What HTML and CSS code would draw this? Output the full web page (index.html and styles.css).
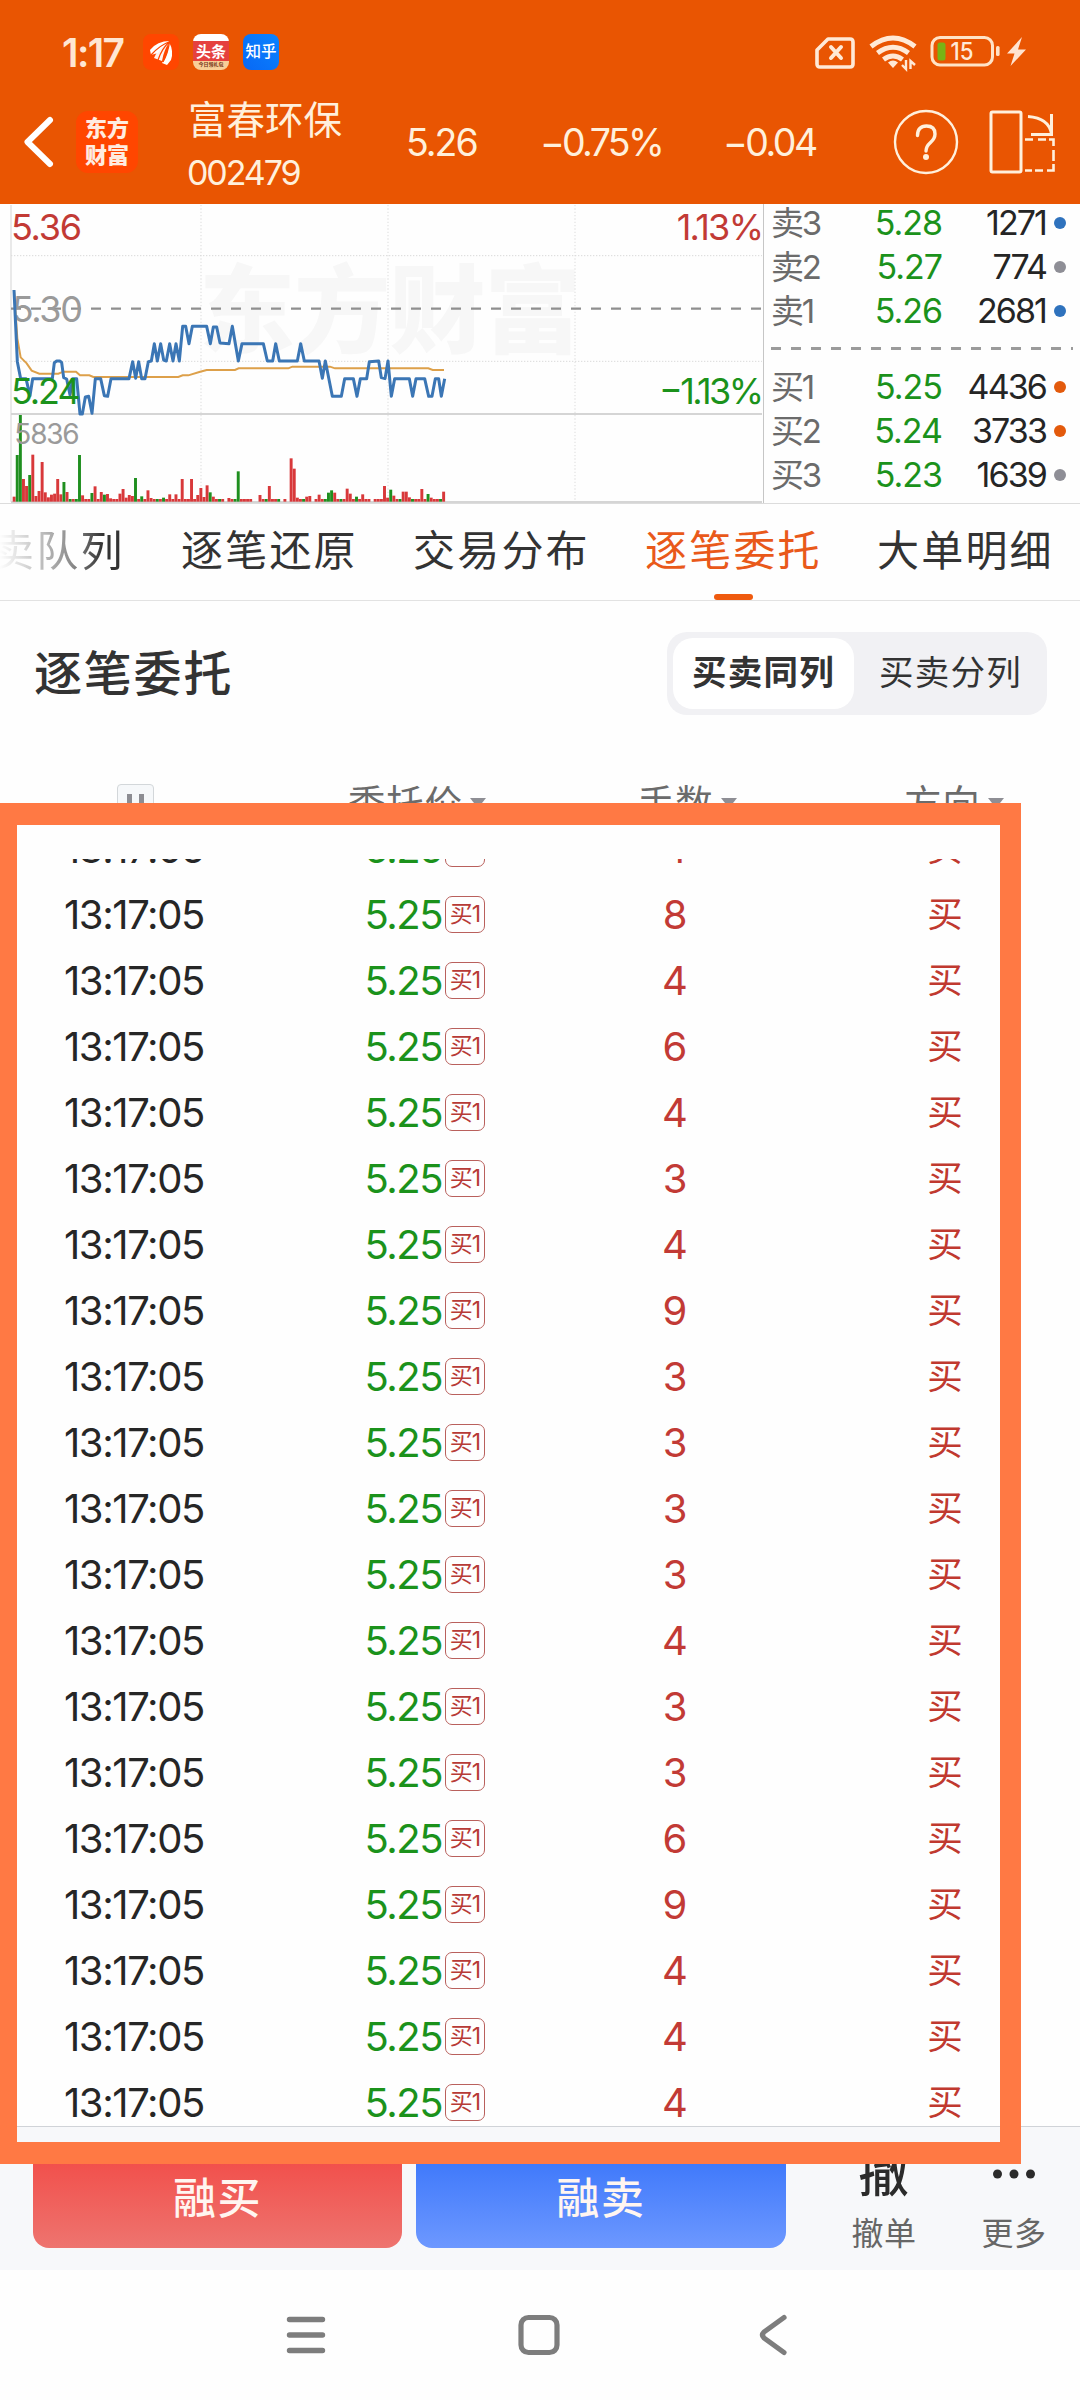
FILE: index.html
```html
<!DOCTYPE html>
<html lang="zh-CN">
<head>
<meta charset="utf-8">
<title>富春环保 002479</title>
<link rel="stylesheet" href="styles.css">
</head>
<body>
<div class="phone">
  <header class="header">
    <div class="status">
      <span class="clock">1:17</span>
      <span class="app app-em"><svg width="36" height="36" viewBox="0 0 36 36"><g fill="#fff"><path d="M7 16Q14 7 27 7Q20 11 15 19L8 21Z"/><path d="M11 24Q16 11 27 7.500Q21 15 19 27Z" opacity=".93"/><path d="M19 29Q25 22 26 8Q31 17 28 26L24 31Z"/></g><path d="M8 21Q17 11 27 7.500M15 26Q19 14 27 7.500M20 28Q25 19 26.500 8" fill="none" stroke="#ff4600" stroke-width="1.300"/></svg></span>
      <span class="app app-tt"><b>头条</b><i>今日领礼包</i></span>
      <span class="app app-zh">知乎</span>
      <svg class="status-icons" width="216" height="40" viewBox="0 0 216 40">
        <path d="M13 5H35Q38 5 38 8V30Q38 33 35 33H5Q2 33 2 30V16Z" fill="none" stroke="#ffe9d6" stroke-width="3.600" stroke-linejoin="round"/>
        <path d="M16 13L26 24M26 13L16 24" stroke="#ffe9d6" stroke-width="4" stroke-linecap="round"/>
        <g fill="none" stroke="#ffe9d6" stroke-width="5"><path d="M56 12.500Q78 -4.500 100 12.500"/><path d="M62.500 19Q78 7.500 93.500 19"/><path d="M68.500 25.500Q78 18.500 87.500 25.500"/></g>
        <path d="M73 28.500Q78 24.500 83 28.500L78 34Z" fill="#ffe9d6"/>
        <path d="M91 26V35L87 31M95.500 35V27L100 31" fill="none" stroke="#ffe9d6" stroke-width="2.400"/>
        <rect x="117" y="3.500" width="60.500" height="27.500" rx="8" fill="none" stroke="#ffe3c6" stroke-width="3"/>
        <rect x="122.500" y="8.500" width="8" height="18" rx="2.500" fill="#78b315"/>
        <text x="135.500" y="25.800" font-size="24.500" font-weight="500" textLength="23" lengthAdjust="spacingAndGlyphs" fill="#ffe9d6">15</text>
        <rect x="181" y="12" width="3.600" height="10" rx="1.600" fill="#ffe3c6"/>
        <path d="M207 3L192 19.500H199.500L195.500 32L211 15.500H203Z" fill="#ffe3d0"/>
      </svg>
    </div>
    <div class="titlebar">
      <svg class="back" width="32" height="54" viewBox="0 0 32 54"><path d="M27 5L4.500 27L27 49" fill="none" stroke="#fff" stroke-width="6" stroke-linecap="round" stroke-linejoin="round"/></svg>
      <div class="logo"><span>东方</span><span>财富</span></div>
      <div class="stock"><span class="stock-name">富春环保</span><span class="stock-code">002479</span></div>
      <span class="h-price">5.26</span>
      <span class="h-pct">−0.75%</span>
      <span class="h-chg">−0.04</span>
      <svg class="help" width="66" height="66" viewBox="0 0 66 66" fill="none" stroke="#fff0dc"><circle cx="33" cy="33" r="31" stroke-width="2.400"/><path d="M24.500 26.500Q24.500 17 33.500 17Q42 17 42 25Q42 29.500 37.500 33.500Q33 37.500 33 42" stroke-width="3.400" stroke-linecap="round"/><circle cx="33" cy="48" r="3" fill="#fff0dc" stroke="none"/></svg>
      <svg class="rotate" width="68" height="64" viewBox="0 0 68 64" fill="none" stroke="#fff0dc"><rect x="2" y="2" width="30" height="60" rx="1.500" stroke-width="3"/><path d="M39 6.500Q60 8 62.500 24M62.500 4V24.500H42" stroke-width="3"/><path d="M36 29.500H44M49 29.500H57M60 29.500H64.500V36M64.500 40V51M64.500 54V60.500H58M54 60.500H46M43 60.500H36" stroke-width="2.600"/></svg>
    </div>
  </header>

  <section class="quote">
    <svg class="chart" width="764" height="300" viewBox="0 27 2292 900">
      <text class="wm" x="597" y="450" textLength="1145">东方财富</text>
      <g fill="none">
        <path d="M603 30V920M1164 30V920M1725 30V920" stroke="#e4e4e4" stroke-width="4" stroke-dasharray="4 6"/>
        <path d="M33 182H2286M33 499H2286" stroke="#dadada" stroke-width="3" stroke-dasharray="4 5"/>
        <path d="M33 30V920" stroke="#dedede" stroke-width="4"/>
        <path d="M33 657H2286M33 921H2286" stroke="#d5d5d5" stroke-width="6"/>
        <path d="M33 341H2286" stroke="#8f8f8f" stroke-width="7" stroke-dasharray="30 30"/>
        <path d="M2290.500 27V924" stroke="#c6c6c6" stroke-width="3"/>
      </g>
      <g id="volume"></g>
      <path d="M42 285L52 430L62 487L80 505L95 527L118 536H175L190 530H228L240 541H268L280 546H535L548 541H565L598 531L620 525H705L716 520H865L877 515H990L1005 520H1285L1298 525H1332" fill="none" stroke="#dda04a" stroke-width="6"/>
      <text class="ct mid" x="35" y="380" textLength="214">5.30</text>
      <path d="M42 285L52 500L62 551H78L90 602L98 551H157L163 503L170 498H180L185 503L191 548L200 552L210 600L218 551H230L240 657H247L256 606L266 604L276 655L286 551H302L313 602L323 604L333 551H387L398 500L407 550L416 500L425 551H435L445 500L454 498L463 446L472 498L482 446L491 495L499 498L509 446L519 498L528 446L538 498L548 394H557L567 446L577 394H620L631 446L640 396H650L660 444L687 446L697 394L715 498L726 446H790L802 498H818L827 446L838 498H892L902 446L913 498H957L967 550L976 498L997 604H1024L1034 551H1060L1071 604L1081 551H1100L1108 500L1136 498L1144 548L1155 551L1164 498L1174 604L1184 551H1228L1238 604L1248 551H1274L1286 604H1296L1306 551H1316L1324 604L1334 551" fill="none" stroke="#3b76b5" stroke-width="9" stroke-linejoin="round"/>
      <text class="ct up" x="33" y="135" textLength="213">5.36</text>
      <text class="ct down" x="33" y="627" textLength="209">5.24</text>
      <text class="ct up" x="2030" y="135" textLength="262">1.13%</text>
      <text class="ct down" x="1977" y="627" textLength="315">−1.13%</text>
      <text class="vol" x="43" y="746" textLength="196">5836</text>
    </svg>
    <div class="book">
      <div class="lv"><span class="side">卖3</span><span class="px">5.28</span><span class="qty">1271</span><i class="dot blue"></i></div>
      <div class="lv"><span class="side">卖2</span><span class="px">5.27</span><span class="qty">774</span><i class="dot"></i></div>
      <div class="lv"><span class="side">卖1</span><span class="px">5.26</span><span class="qty">2681</span><i class="dot blue"></i></div>
      <div class="split"></div>
      <div class="lv"><span class="side">买1</span><span class="px">5.25</span><span class="qty">4436</span><i class="dot orange"></i></div>
      <div class="lv"><span class="side">买2</span><span class="px">5.24</span><span class="qty">3733</span><i class="dot orange"></i></div>
      <div class="lv"><span class="side">买3</span><span class="px">5.23</span><span class="qty">1639</span><i class="dot"></i></div>
    </div>
  </section>

  <nav class="tabs">
    <span class="tab faded">卖队列</span>
    <span class="tab">逐笔还原</span>
    <span class="tab">交易分布</span>
    <span class="tab active">逐笔委托</span>
    <span class="tab">大单明细</span>
  </nav>

  <section class="panel-head">
    <h1>逐笔委托</h1>
    <div class="segment"><span class="seg on">买卖同列</span><span class="seg">买卖分列</span></div>
  </section>

  <div class="cols">
    <span class="pause"><i></i><i></i></span>
    <span class="col c-price">委托价<i class="tri"></i></span>
    <span class="col c-qty">手数<i class="tri"></i></span>
    <span class="col c-dir">方向<i class="tri"></i></span>
  </div>
  <div class="list" id="orders"></div>

  <footer class="toolbar">
    <span class="btn buy">融买</span>
    <span class="btn sell">融卖</span>
    <span class="tool cancel"><b>撤</b><span>撤单</span></span>
    <span class="tool more"><svg width="44" height="12" viewBox="0 0 44 12" fill="#2b2b2b"><circle cx="5.500" cy="6" r="4.500"/><circle cx="22" cy="6" r="4.500"/><circle cx="38.500" cy="6" r="4.500"/></svg><span>更多</span></span>
  </footer>
  <div class="navbar">
    <svg width="40" height="44" viewBox="0 0 40 44"><path d="M3.500 6.500H36.500M3.500 22H36.500M3.500 37.500H36.500" stroke="#7d7d7d" stroke-width="5.400" stroke-linecap="round"/></svg>
    <svg width="44" height="44" viewBox="0 0 44 44"><rect x="4" y="4.500" width="36" height="35" rx="7.500" fill="none" stroke="#7d7d7d" stroke-width="5.200"/></svg>
    <svg width="30" height="44" viewBox="0 0 30 44"><path d="M26 4.500L6 19Q3 22 6 25L26 39.500" fill="none" stroke="#7d7d7d" stroke-width="5.200" stroke-linecap="round" stroke-linejoin="round"/></svg>
  </div>
  <div class="highlight"></div>
</div>
<script src="app.js"></script>
</body>
</html>
```
FILE: styles.css
```css
* { box-sizing: border-box; }
body { margin: 0; background: #fff; font-family: Inter, "Noto Sans CJK SC", sans-serif; color: #2a2a2a; }
i { font-style: normal; }
.phone { position: relative; width: 1080px; height: 2400px; overflow: hidden; background: #fefefe; display: flex; flex-direction: column; }

.header { height: 204px; background: #e95502; color: #fff0dc; flex: none; }
.status { display: flex; align-items: center; height: 104px; padding: 0 44px 0 62px; }
.clock { width: 81px; font-size: 39px; font-weight: 600; letter-spacing: -1.600px; color: #ffe6d2; line-height: 40px; padding-top: 1px; }
.app { width: 36px; height: 36px; border-radius: 8px; margin-right: 14px; overflow: hidden; display: flex; flex-direction: column; align-items: center; flex: none; }
.app-em { background: #ff4600; }
.app-tt { background: linear-gradient(#fff 0 7px, #e5413f 7px 27px, #f8cf98 27px); color: #fff; }
.app-tt b { font-size: 15px; line-height: 16px; margin-top: 10px; font-weight: 700; }
.app-tt i { font-size: 5px; line-height: 9px; color: #703015; font-weight: 700; }
.app-zh { background: linear-gradient(45deg, #0868f5, #0a84ff); color: #fff; font-size: 15.500px; line-height: 36px; font-weight: 500; }
.status-icons { margin: 3px 5px 0 auto; }

.titlebar { display: flex; align-items: center; height: 76px; }
.back { margin-left: 23px; }
.logo { width: 62px; height: 62px; margin-left: 21px; border-radius: 12px; background: #ff4600; color: #ffece0; font-weight: 900; font-size: 22px; line-height: 27px; display: flex; flex-direction: column; align-items: center; justify-content: center; flex: none; }
.stock { margin-left: 50px; width: 218px; padding-top: 9px; display: flex; flex-direction: column; }
.stock-name { font-size: 38.500px; line-height: 52px; }
.stock-code { font-size: 34px; line-height: 54px; letter-spacing: -2.100px; margin-left: -1px; }
.h-price, .h-pct, .h-chg { font-size: 37.500px; letter-spacing: -2.500px; line-height: 40px; white-space: nowrap; padding-top: 1px; }
.h-price { width: 134px; letter-spacing: -2px; }
.h-pct { width: 183px; letter-spacing: -2.700px; }
.h-chg { width: 170px; }
.rotate { margin-left: 30px; }

.quote { height: 300px; display: flex; border-bottom: 1px solid #dcdcdc; flex: none; }
.chart { display: block; flex: none; }
.chart text { font-family: Inter, "Noto Sans CJK SC", sans-serif; }
.wm { font-size: 288px; font-weight: 900; fill: #f7f7f7; }
.ct { font-size: 108px; }
.up { fill: #c23a35; }
.down { fill: #1b921b; }
.mid { fill: #9a9a9a; }
.vol { font-size: 84px; fill: #9a9a9a; }
.book { flex: 1; display: flex; flex-direction: column; margin-top: -3px; }
.lv { display: grid; grid-template-columns: 72px 99px 104px 20px; padding-left: 7px; align-items: center; height: 44px; font-size: 34px; line-height: 44px; letter-spacing: -2.200px; }
.side { font-size: 33px; color: #6b6b6b; }
.px { text-align: right; color: #1b921b; letter-spacing: -1px; }
.qty { text-align: right; color: #252525; letter-spacing: -1.900px; }
.dot { width: 12px; height: 12px; border-radius: 50%; background: #8e8e96; margin-left: 8px; }
.dot.blue { background: #2f72bd; }
.dot.orange { background: #e35a0c; }
.split { height: 3px; margin: 14px 7px 15px; background: repeating-linear-gradient(90deg, #9b9b9b 0 10px, transparent 10px 20px); }

.tabs { height: 97px; display: flex; border-bottom: 1px solid #e2e2e2; gap: 54px; flex: none; }
.tab { position: relative; width: 178px; font-size: 42px; letter-spacing: 2.200px; line-height: 94px; color: #333; white-space: nowrap; flex: none; }
.tab.faded { width: 135px; margin-left: -8px; background: linear-gradient(90deg, #fff 5%, #bbb 38%, #888 60%, #333 82%); -webkit-background-clip: text; background-clip: text; color: transparent; }
.tab.active { color: #e9591a; }
.tab.active::after { content: ""; position: absolute; left: 69px; bottom: 0; width: 39px; height: 6px; border-radius: 3px; background: #ef5a0e; }

.panel-head { height: 147px; flex: none; display: flex; align-items: center; justify-content: space-between; padding: 0 33px 2px 34px; }
h1 { margin: 0; font-size: 48px; font-weight: 500; letter-spacing: 1.800px; color: #333; line-height: 60px; }
.segment { width: 380px; height: 83px; border-radius: 20px; background: #f1f1f4; display: flex; padding: 6px; }
.seg { width: 181px; height: 71px; line-height: 70px; text-align: center; font-size: 34.500px; letter-spacing: 1.300px; color: #333; white-space: nowrap; }
.seg + .seg { margin-left: 6px; }
.seg.on { background: #fff; border-radius: 20px; font-weight: 700; }

.cols { height: 111px; padding: 36px 0 0 117px; display: flex; flex: none; }
.pause { width: 37px; height: 37px; border: 1px solid #d3d7da; border-radius: 4px; background: #f6f8fa; display: flex; justify-content: center; gap: 7px; padding-top: 9px; margin-right: 194px; }
.pause i { width: 5px; height: 18px; background: #8c8c92; }
.col { display: flex; font-size: 37.500px; line-height: 40px; letter-spacing: .8px; color: #6b6b6b; white-space: nowrap; }
.tri { border: 8.500px solid transparent; border-top: 10px solid #8e8e94; border-bottom: 0; height: 0; margin: 14px 0 0 7px; }
.c-price { width: 289px; }
.c-qty { width: 267px; }

.list { height: 1267px; overflow: hidden; flex: none; }
.row { display: grid; grid-template-columns: 278px 164px 43px 380px 160px; height: 66px; align-items: center; font-size: 40px; line-height: 66px; }
.row:first-child { margin-top: -43.500px; }
.time { padding-left: 64px; letter-spacing: -1.400px; white-space: nowrap; color: #262626; }
.price { text-align: right; letter-spacing: -1.500px; color: #1b921b; }
.tag { width: 40px; height: 37px; margin-left: 3px; border: 1px solid #b9605c; border-radius: 7px; color: #b73a36; font-size: 23px; line-height: 34px; letter-spacing: -1px; text-align: center; white-space: nowrap; }
.count { text-align: center; color: #c23a35; }
.dir { font-size: 35.500px; text-align: center; color: #c0392f; line-height: 60px; }

.toolbar { height: 144px; background: #f7f8fa; border-top: 1px solid #d0d3d8; padding: 21px 0 0 33px; display: flex; flex: none; }
.btn { width: 369px; height: 100px; border-radius: 16px; color: #fff5f0; font-size: 43px; font-weight: 500; line-height: 100px; letter-spacing: 1.600px; text-align: center; margin-right: 14px; }
.buy { background: linear-gradient(#f24a46, #ee746f); }
.sell { background: linear-gradient(#3874fa, #6d98ff); width: 370px; }
.tool { display: flex; flex-direction: column; align-items: center; font-size: 32px; color: #666; line-height: 40px; letter-spacing: .6px; }
.cancel { width: 84px; margin-left: 42px; }
.cancel b { font-size: 51px; line-height: 60px; font-weight: 500; color: #2b2b2b; margin-top: -4px; }
.cancel span { margin-top: 10px; }
.more { width: 80px; margin-left: 48px; }
.more svg { margin-top: 20px; }
.more span { margin-top: 34px; }

.navbar { flex: 1; display: flex; padding: 43px 0 0 286px; background: #fefefe; }
.navbar svg:nth-child(2) { margin-left: 191px; }
.navbar svg:nth-child(3) { margin-left: 197px; }

/* annotation frame drawn over the order list */
.highlight { position: absolute; left: 0; top: 803px; width: 1021px; height: 1361px; border: solid #ff7944; border-width: 22px 21px 22px 17px; }
```
FILE: app.js
```js
// Order rows: only the lot size varies.
var counts = [4, 8, 4, 6, 4, 3, 4, 9, 3, 3, 3, 3, 4, 3, 3, 6, 9, 4, 4, 4];
document.getElementById("orders").innerHTML = counts.map(function (n) {
  return '<div class="row"><span class="time">13:17:05</span><span class="price">5.25</span>' +
    '<span class="tag">买1</span><span class="count">' + n + '</span><span class="dir">买</span></div>';
}).join("");

// Volume bars: colour and height per minute, "-" is a minute without trades.
var bars = ("r15 g140 g260 r68 r47 g80 r141 r17 r32 r119 r28 r13 r21 r24 r68 r22 g59 r29 g8 r8 g8 g140 r19 r8 r8 g26 r46 r8 r29 g21 r23 r10 r8 r8 r24 r38 r12 r20 r17 g71 r8 g16 r8 r34 r11 r8 g8 r8 g12 r8 r22 r8 r22 r8 r68 r8 r8 r68 r8 r20 r41 r14 r49 g28 r15 r8 g8 r8 - r11 r8 g8 g91 r8 r8 r8 r8 - - r20 r8 g8 r47 r8 r8 g8 - r8 - r130 r99 r12 r8 g8 r15 r17 - r8 r21 r8 g8 g27 g34 r27 r8 g8 r8 r39 r24 r8 g15 r8 r22 r8 r8 - r8 r8 r8 r47 r12 g36 r18 r8 g8 r30 r30 r13 g8 r8 r8 r38 r8 g23 r12 r8 r8 g8 r30").split(" ");
document.getElementById("volume").innerHTML = bars.map(function (b, i) {
  if (b === "-") return "";
  var h = +b.slice(1);
  return '<rect x="' + (38 + i * 9.337).toFixed(1) + '" y="' + (920 - h) + '" width="8.8" height="' + h +
    '" fill="' + (b[0] === "r" ? "#d8383a" : "#1f8f1f") + '"/>';
}).join("");
```
